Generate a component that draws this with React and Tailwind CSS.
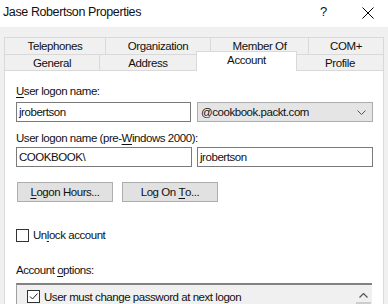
import React from "react";

const F = { fontFamily: '"Liberation Sans", Arial, sans-serif' };

function U({ children }) {
  return <span className="underline underline-offset-[2px] decoration-[1px]">{children}</span>;
}

export default function App() {
  return (
    <div className="w-[388px] h-[304px] bg-[#f0f0f0] overflow-hidden text-[#111]" style={F}>
      {/* title bar */}
      <div className="h-[27px] bg-white flex items-start">
        <div className="pl-[3px] pt-[3px] text-[12.5px] leading-[18px] tracking-[-0.4px]">Jase Robertson Properties</div>
        <div className="flex-1" />
        <div className="pt-[3px] text-[13px] leading-[18px] w-[8px] mr-[34px]">?</div>
        <svg width="12" height="12" viewBox="0 0 12 12" className="mt-[7px] mr-[14px]">
          <path d="M0.5 0.5 L11.5 11.5 M11.5 0.5 L0.5 11.5" stroke="#000" strokeWidth="1" />
        </svg>
      </div>

      {/* tabs */}
      <div className="mt-[10px] ml-[4px] w-[380px] text-[11.5px] leading-[15px] tracking-[-0.4px]">
        <div className="flex h-[17px]">
          <div className="w-[101px] border-t border-l border-[#d9d9d9] flex items-center justify-center">Telephones</div>
          <div className="w-[105px] border-t border-l border-[#d9d9d9] flex items-center justify-center">Organization</div>
          <div className="w-[98px] border-t border-l border-[#d9d9d9] flex items-center justify-center">Member Of</div>
          <div className="flex-1 border-t border-l border-r border-[#d9d9d9] flex items-center justify-center">COM+</div>
        </div>
        <div className="flex h-[16px] items-start">
          <div className="w-[95px] h-[16px] border-t border-l border-[#d9d9d9] flex items-center justify-center pt-[1px]">General</div>
          <div className="w-[97px] h-[16px] border-t border-l border-[#d9d9d9] flex items-center justify-center pt-[1px]">Address</div>
          <div className="relative z-10 w-[101px] h-[20px] -mt-[3px] bg-white border-t border-l border-r border-[#d9d9d9] flex items-start justify-center pt-[1px]">Account</div>
          <div className="flex-1 h-[16px] border-t border-r border-[#d9d9d9] flex items-center justify-center pt-[1px]">Profile</div>
        </div>
      </div>

      {/* panel */}
      <div className="ml-[4px] w-[380px] h-[240px] bg-white border border-[#d9d9d9] pl-[11px] pr-[10px] text-[11.5px] leading-[15px] tracking-[-0.45px] flex flex-col">
        <div className="mt-[13px]"><U>U</U>ser logon name:</div>
        <div className="mt-[3px] flex gap-[6px]">
          <div className="w-[175px] h-[20px] border border-[#7a7a7a] flex items-center pl-[2px]">jrobertson</div>
          <div className="flex-1 h-[20px] bg-[#e5e5e5] border border-[#adadad] flex items-center pl-[3px] pr-[6px]">
            <span className="flex-1">@cookbook.packt.com</span>
            <svg width="9" height="5" viewBox="0 0 9 5">
              <path d="M0.5 0.5 L4.5 4.5 L8.5 0.5" stroke="#555" strokeWidth="1" fill="none" />
            </svg>
          </div>
        </div>
        <div className="mt-[9px]">User logon name (pre-<U>W</U>indows 2000):</div>
        <div className="mt-[1px] flex gap-[5px]">
          <div className="w-[176px] h-[20px] border border-[#7a7a7a] flex items-center pl-[2px]">COOKBOOK\</div>
          <div className="flex-1 h-[20px] border border-[#7a7a7a] flex items-center pl-[2px]">jrobertson</div>
        </div>
        <div className="mt-[15px] flex gap-[9px] pl-[1px]">
          <div className="w-[96px] h-[20px] bg-[#e1e1e1] border border-[#adadad] flex items-center justify-center"><U>L</U>ogon Hours...</div>
          <div className="w-[96px] h-[20px] bg-[#e1e1e1] border border-[#adadad] flex items-center justify-center">Log On&nbsp;<U>T</U>o...</div>
        </div>
        <div className="mt-[26px] flex items-center gap-[4px]">
          <div className="w-[13px] h-[13px] border border-[#333] bg-white" />
          <span>Un<U>l</U>ock account</span>
        </div>
        <div className="mt-[20px]">Account&nbsp;<U>o</U>ptions:</div>
        <div className="mt-[5px] mr-[1px] flex-1 border-t-2 border-l border-t-[#828282] border-l-[#a0a0a0] bg-[#f0f0f0] flex">
          <div className="flex-1 flex items-start pt-[5px] pl-[10px] gap-[4px]">
            <div className="w-[13px] h-[13px] border border-[#333] bg-white flex items-center justify-center">
              <svg width="11" height="11" viewBox="0 0 11 11">
                <path d="M2 5.5 L4.5 8 L9.5 2.5" stroke="#222" strokeWidth="1" fill="none" />
              </svg>
            </div>
            <span className="leading-[14px]">User must change password at next logon</span>
          </div>
          <div className="w-[17px] bg-[#f0f0f0] flex flex-col items-center">
            <svg width="9" height="5" viewBox="0 0 9 5" className="mt-[8px]">
              <path d="M0.5 4.5 L4.5 0.5 L8.5 4.5" stroke="#555" strokeWidth="1.2" fill="none" />
            </svg>
            <div className="mt-[4px] w-[15px] flex-1 bg-[#cdcdcd]" />
          </div>
        </div>
      </div>
    </div>
  );
}
